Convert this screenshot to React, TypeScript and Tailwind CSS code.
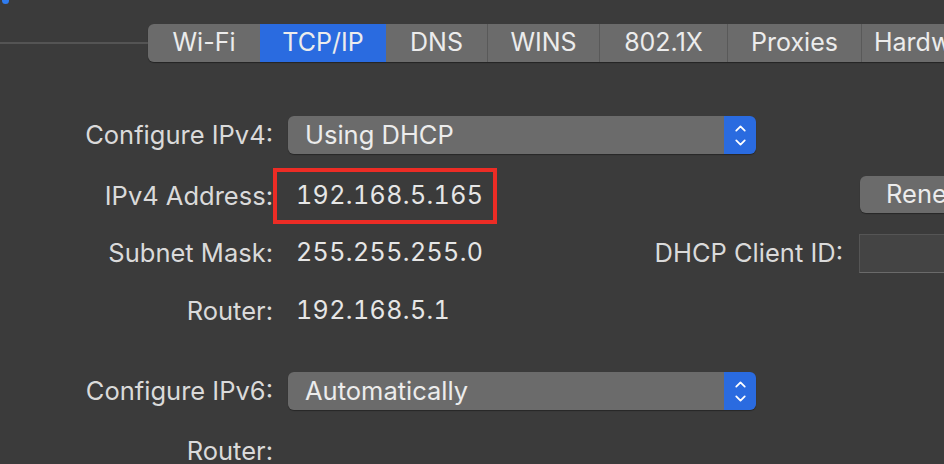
import { ChevronDown, ChevronUp } from 'lucide-react'

const TABS = [
  { name: 'Wi-Fi', w: 112 },
  { name: 'TCP/IP', w: 126, active: true },
  { name: 'DNS', w: 101 },
  { name: 'WINS', w: 112 },
  { name: '802.1X', w: 128 },
  { name: 'Proxies', w: 134 },
  { name: 'Hardware', w: 140 },
]

function Popup({ value }: { value: string }) {
  return (
    <div className="flex h-[38px] w-[468px] shrink-0 overflow-hidden rounded-[6px] shadow-[0_1px_1px_rgba(0,0,0,0.35)]">
      <div className="flex flex-1 items-center bg-[#6b6b6b] pl-[17px] text-[25.5px] text-[#ececec]">{value}</div>
      <div className="flex w-[32px] flex-col items-center justify-center bg-[#2a6be0] text-white">
        <ChevronUp size={17} strokeWidth={2.5} className="-mb-[3px]" />
        <ChevronDown size={17} strokeWidth={2.5} />
      </div>
    </div>
  )
}

function Label({ children }: { children: string }) {
  return <div className="w-[273px] shrink-0 whitespace-nowrap text-right text-[25.5px] text-[#dadada]">{children}</div>
}

export default function App() {
  return (
    <div
      className="h-[464px] w-[944px] overflow-hidden bg-[#3b3b3b]"
      style={{ fontFamily: 'Inter, "Liberation Sans", sans-serif' }}
    >
      <div className="ml-[2px] h-[4px] w-[7px] rounded-b-full bg-[#2f7cf0]" />

      {/* tab strip */}
      <div className="mt-[20px] flex items-start">
        <div className="mt-[18px] h-[2px] w-[148px] shrink-0 bg-[#545454]" />
        <div className="flex h-[38px] shrink-0 overflow-hidden rounded-l-[6px] shadow-[0_1px_1px_rgba(0,0,0,0.4)]">
          {TABS.map((t, i) => (
            <div
              key={t.name}
              style={{ width: t.w }}
              className={`flex shrink-0 items-center justify-center whitespace-nowrap text-[25px] text-[#ececec] ${
                t.active ? 'bg-[#2a6be0]' : 'bg-[#6b6b6b]'
              } ${i > 0 && !t.active && !TABS[i - 1].active ? 'border-l border-[#595959]' : ''}`}
            >
              {t.name}
            </div>
          ))}
        </div>
      </div>

      {/* form */}
      <div className="mt-[54px] flex flex-col">
        <div className="flex h-[38px] items-center">
          <Label>Configure IPv4:</Label>
          <div className="ml-[15px]">
            <Popup value="Using DHCP" />
          </div>
        </div>

        <div className="mt-[14px] flex h-[56px]">
          <div className="flex items-center">
            <Label>IPv4 Address:</Label>
          </div>
          <div className="flex h-[56px] w-[224px] shrink-0 items-center border-[4px] border-[#ec2c25] pl-[19px] text-[25px] tracking-[0.4px] tabular-nums text-[#e6e6e6]">
            192.168.5.165
          </div>
          <div className="ml-[363px] mt-[8px] flex h-[37px] w-[120px] shrink-0 items-center whitespace-nowrap rounded-[6px] bg-[#6b6b6b] pl-[26px] text-[25.5px] text-[#ececec] shadow-[0_1px_1px_rgba(0,0,0,0.35)]">
            Renew DHCP Lease
          </div>
        </div>

        <div className="mt-[9px] flex h-[40px] items-center">
          <Label>Subnet Mask:</Label>
          <div className="flex w-[570px] shrink-0 items-center justify-between whitespace-nowrap text-[25px]">
            <span className="pl-[23px] tracking-[0.4px] tabular-nums text-[#e6e6e6]">255.255.255.0</span>
            <span className="text-[25.5px] text-[#dadada]">DHCP Client ID:</span>
          </div>
          <div className="ml-[16px] h-[39px] w-[120px] shrink-0 border border-[#555555] border-b-[#6a6a6a] bg-[#444444]" />
        </div>

        <div className="mt-[18px] flex h-[40px] items-center">
          <Label>Router:</Label>
          <div className="pl-[23px] text-[25px] tracking-[0.4px] tabular-nums text-[#e6e6e6]">192.168.5.1</div>
        </div>

        <div className="mt-[41px] flex h-[38px] items-center">
          <Label>Configure IPv6:</Label>
          <div className="ml-[15px]">
            <Popup value="Automatically" />
          </div>
        </div>

        <div className="mt-[21px] flex h-[40px] items-center">
          <Label>Router:</Label>
        </div>
      </div>
    </div>
  )
}
